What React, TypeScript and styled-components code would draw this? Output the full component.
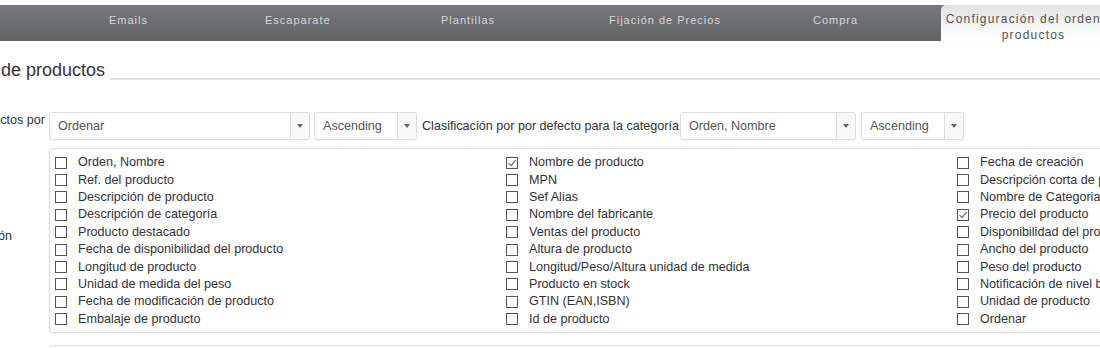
import React from "react"
import styled, { createGlobalStyle } from "styled-components"

const GlobalStyle = createGlobalStyle`
  html, body {
    margin: 0;
    padding: 0;
    background: #fff;
  }
  body {
    font-family: "Liberation Sans", Arial, sans-serif;
    color: #333;
  }
`

const Page = styled.div`
  width: 1100px;
  height: 348px;
  overflow: hidden;
  padding-top: 5px;
  box-sizing: border-box;
`

const Nav = styled.div`
  display: flex;
  align-items: flex-start;
  height: 36px;
  padding-left: 109px;
  background: linear-gradient(#76777a, #636466);
`

const NavTab = styled.div<{ $w: number }>`
  flex: 0 0 ${({ $w }) => $w}px;
  padding-top: 7px;
  font-size: 11px;
  line-height: 16px;
  letter-spacing: 1px;
  color: #d6d6d6;
  white-space: nowrap;
`

const ActiveTab = styled.div`
  flex: 0 0 185px;
  height: 40px;
  box-sizing: border-box;
  padding-top: 6px;
  border-top-left-radius: 5px;
  background: linear-gradient(#e2e2e2, #fbfbfb 70%, #fff);
  font-size: 12px;
  line-height: 16px;
  letter-spacing: 1.2px;
  color: #555;
  text-align: center;
  white-space: nowrap;
`

const TitleRow = styled.div`
  display: flex;
  align-items: flex-end;
  margin-top: 18px;
  height: 22px;
`

const Clip = styled.div<{ $w: number; $pad?: number }>`
  flex: 0 0 ${({ $w }) => $w}px;
  box-sizing: border-box;
  padding-right: ${({ $pad }) => $pad ?? 0}px;
  display: flex;
  justify-content: flex-end;
  overflow: hidden;
  white-space: nowrap;
`

const Title = styled.span`
  font-size: 18px;
  line-height: 22px;
  color: #333;
`

const Rule = styled.div`
  flex: 1;
  height: 2px;
  margin: 0 0 1px 5px;
  background: #e4e4e4;
`

const FormRow = styled.div<{ $top: number }>`
  display: flex;
  align-items: flex-start;
  gap: 4px;
  margin-top: ${({ $top }) => $top}px;
  font-size: 12.6px;
  line-height: 17px;
`

const Label = styled.span`
  color: #333;
`

const Controls = styled.div`
  display: flex;
  align-items: center;
  flex-shrink: 0;
`

const Select = styled.div<{ $w: number; $gap?: number }>`
  display: flex;
  align-items: stretch;
  width: ${({ $w }) => $w}px;
  height: 28px;
  margin-right: ${({ $gap }) => $gap ?? 0}px;
  box-sizing: border-box;
  border: 1px solid #ddd;
  border-radius: 3px;
  background: #fff;
  box-shadow: 0 1px 1px rgba(0, 0, 0, 0.04);
`

const SelectValue = styled.span`
  flex: 1;
  padding-left: 8px;
  line-height: 26px;
  color: #555;
  white-space: nowrap;
  overflow: hidden;
`

const SelectArrow = styled.span`
  flex: 0 0 18px;
  display: flex;
  align-items: center;
  justify-content: center;
  border-left: 1px solid #ddd;
  background: #f8f8f8;
  border-radius: 0 2px 2px 0;

  &::after {
    content: "";
    border-left: 3px solid transparent;
    border-right: 3px solid transparent;
    border-top: 4px solid #666;
  }
`

const InlineText = styled.span<{ $gap: number }>`
  margin-right: ${({ $gap }) => $gap}px;
  color: #333;
  white-space: nowrap;
`

const OptionsBox = styled.div`
  display: grid;
  grid-template-columns: repeat(3, 451px);
  flex-shrink: 0;
  width: 1380px;
  box-sizing: border-box;
  padding: 5px 5px 4px;
  border: 1px solid #ddd;
  border-radius: 4px;
  box-shadow: 0 1px 2px rgba(0, 0, 0, 0.05);
`

const EmptyBox = styled(OptionsBox)`
  height: 40px;
`

const OptionColumn = styled.div`
  display: flex;
  flex-direction: column;
`

const Option = styled.label`
  display: flex;
  align-items: center;
  gap: 11px;
  height: 17.4px;
  font-size: 12.6px;
  color: #333;
  white-space: nowrap;
`

const Box = styled.span`
  flex: 0 0 12px;
  height: 12px;
  box-sizing: border-box;
  border: 1px solid #555;
  background: #fff;
  display: flex;
  align-items: center;
  justify-content: center;
`

const SideLabel = styled(Clip)`
  align-self: center;
  margin-bottom: 7px;
`

type Item = { label: string; checked?: boolean }

const columns: Item[][] = [
  [
    { label: "Orden, Nombre" },
    { label: "Ref. del producto" },
    { label: "Descripción de producto" },
    { label: "Descripción de categoría" },
    { label: "Producto destacado" },
    { label: "Fecha de disponibilidad del producto" },
    { label: "Longitud de producto" },
    { label: "Unidad de medida del peso" },
    { label: "Fecha de modificación de producto" },
    { label: "Embalaje de producto" },
  ],
  [
    { label: "Nombre de producto", checked: true },
    { label: "MPN" },
    { label: "Sef Alias" },
    { label: "Nombre del fabricante" },
    { label: "Ventas del producto" },
    { label: "Altura de producto" },
    { label: "Longitud/Peso/Altura unidad de medida" },
    { label: "Producto en stock" },
    { label: "GTIN (EAN,ISBN)" },
    { label: "Id de producto" },
  ],
  [
    { label: "Fecha de creación" },
    { label: "Descripción corta de producto" },
    { label: "Nombre de Categoria" },
    { label: "Precio del producto", checked: true },
    { label: "Disponibilidad del producto" },
    { label: "Ancho del producto" },
    { label: "Peso del producto" },
    { label: "Notificación de nivel bajo de stock" },
    { label: "Unidad de producto" },
    { label: "Ordenar" },
  ],
]

const tabs = [
  { name: "Emails", w: 156 },
  { name: "Escaparate", w: 176 },
  { name: "Plantillas", w: 168 },
  { name: "Fijación de Precios", w: 204 },
  { name: "Compra", w: 128 },
]

const Check = ({ checked }: { checked?: boolean }) => (
  <Box>
    {checked && (
      <svg width="10" height="10" viewBox="0 0 10 10">
        <path d="M1.5 5.2 L4 7.6 L8.7 2.2" fill="none" stroke="#666" strokeWidth="1.1" />
      </svg>
    )}
  </Box>
)

const App = () => (
  <Page>
    <GlobalStyle />
    <Nav>
      {tabs.map((t) => (
        <NavTab key={t.name} $w={t.w}>
          {t.name}
        </NavTab>
      ))}
      <ActiveTab>
        Configuración del orden de
        <br />
        productos
      </ActiveTab>
    </Nav>

    <TitleRow>
      <Clip $w={105}>
        <Title>Configuración del orden de productos</Title>
      </Clip>
      <Rule />
    </TitleRow>

    <FormRow $top={31}>
      <Clip $w={45}>
        <Label>Ordenar productos por</Label>
      </Clip>
      <Controls>
        <Select $w={261} $gap={4}>
          <SelectValue>Ordenar</SelectValue>
          <SelectArrow />
        </Select>
        <Select $w={103} $gap={5}>
          <SelectValue>Ascending</SelectValue>
          <SelectArrow />
        </Select>
        <InlineText $gap={1}>Clasificación por por defecto para la categoría</InlineText>
        <Select $w={176} $gap={5}>
          <SelectValue>Orden, Nombre</SelectValue>
          <SelectArrow />
        </Select>
        <Select $w={103}>
          <SelectValue>Ascending</SelectValue>
          <SelectArrow />
        </Select>
      </Controls>
    </FormRow>

    <FormRow $top={8}>
      <SideLabel $w={45} $pad={33}>
        <Label>Campos de clasificación</Label>
      </SideLabel>
      <OptionsBox>
        {columns.map((col, i) => (
          <OptionColumn key={i}>
            {col.map((item) => (
              <Option key={item.label}>
                <Check checked={item.checked} />
                {item.label}
              </Option>
            ))}
          </OptionColumn>
        ))}
      </OptionsBox>
    </FormRow>

    <FormRow $top={12}>
      <Clip $w={45} />
      <EmptyBox />
    </FormRow>
  </Page>
)

export default App
